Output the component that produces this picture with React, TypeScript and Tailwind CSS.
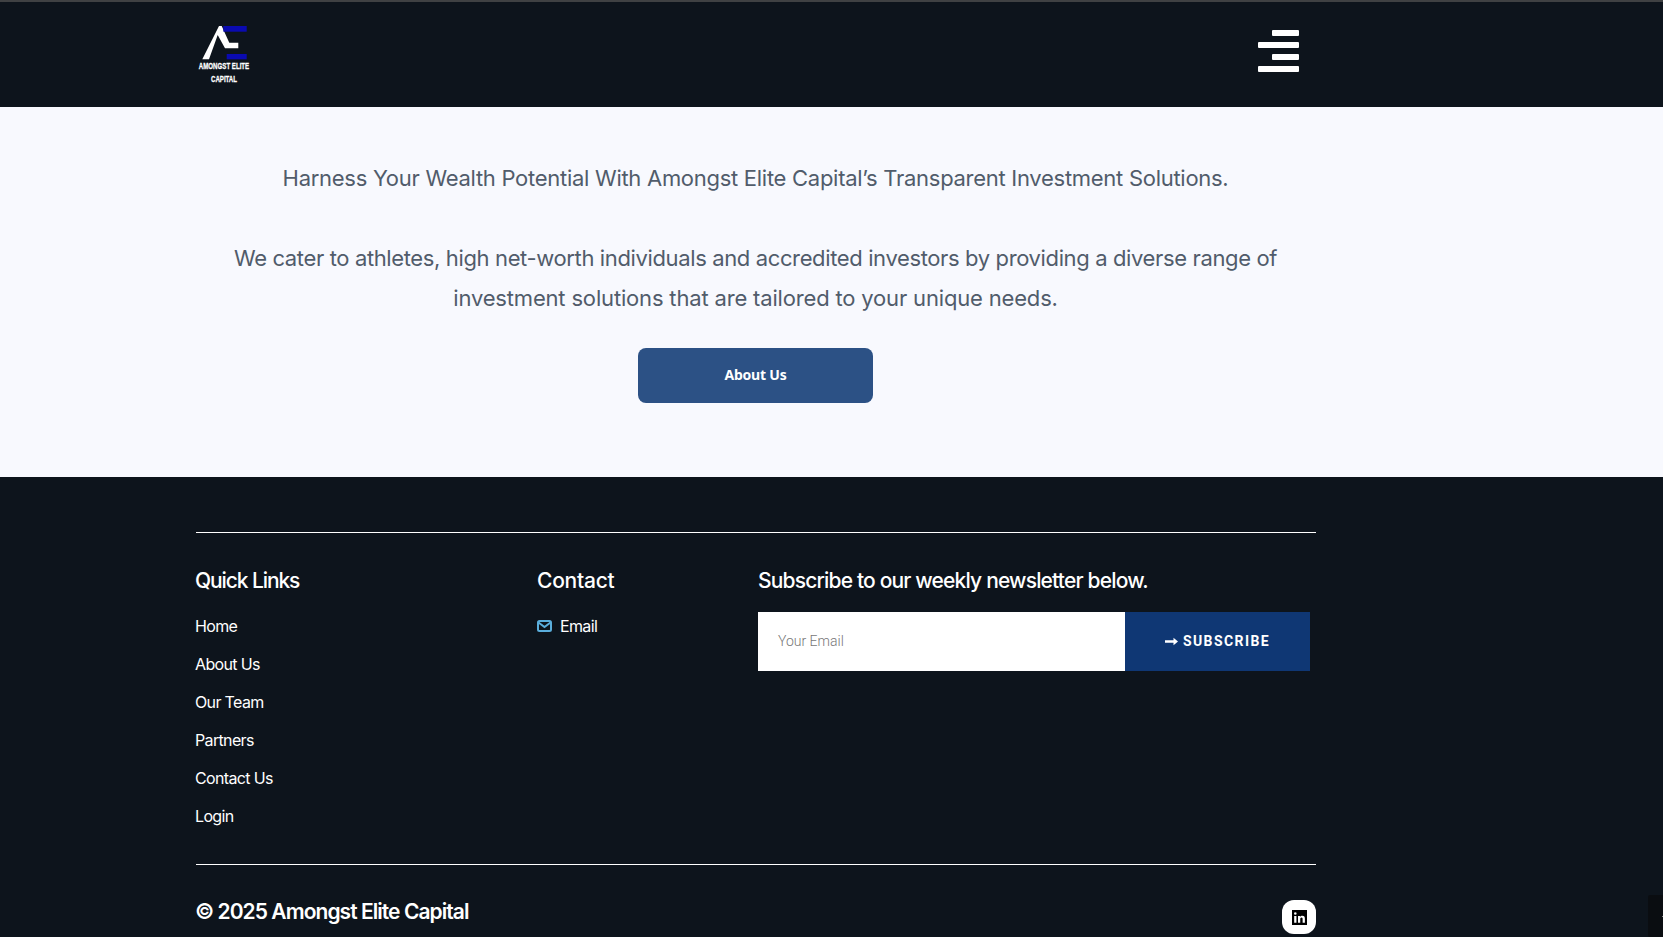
const quickLinks = ['Home', 'About Us', 'Our Team', 'Partners', 'Contact Us', 'Login'];

function Logo() {
  return (
    <div className="flex w-[48px] flex-col items-center">
      <svg width="48" height="34" viewBox="0 0 48 34" className="block">
        <path d="M2.300 33.300 L19 0 L21.700 0 L29.300 16.700 L38.300 16.700 L38.300 22.300 L25 22.300 L17.700 9 L9 33.300 Z" fill="#fff" />
        <rect x="23.300" y="0" width="23.400" height="5.700" fill="#0a0ab0" />
        <rect x="26.700" y="28" width="20" height="5.300" fill="#0a0ab0" />
      </svg>
      <div className="scale-x-[0.68] whitespace-nowrap text-center font-['Liberation_Sans',sans-serif] text-[9px] leading-[13px] font-bold text-white [-webkit-text-stroke:0.3px_white]">
        <div>AMONGST ELITE</div>
        <div>CAPITAL</div>
      </div>
    </div>
  );
}

function MenuBars() {
  return (
    <div className="flex w-[41px] flex-col items-end gap-[6px]">
      <div className="h-[6px] w-[27px] rounded-[1px] bg-white" />
      <div className="h-[6px] w-[41px] rounded-[1px] bg-white" />
      <div className="h-[6px] w-[27px] rounded-[1px] bg-white" />
      <div className="h-[6px] w-[41px] rounded-[1px] bg-white" />
    </div>
  );
}

function MailIcon() {
  return (
    <svg width="15" height="12" viewBox="0 0 15 12" fill="none" stroke="#5aaedc" strokeWidth="2">
      <rect x="1" y="1" width="13" height="10" rx="1.500" />
      <path d="M1.500 2.500 L7.500 7 L13.500 2.500" />
    </svg>
  );
}

function ArrowIcon() {
  return (
    <svg width="13" height="9" viewBox="0 0 13 9" fill="#fff">
      <path d="M0 3.300h8.500V0.800L13 4.500 8.500 8.200V5.700H0z" />
    </svg>
  );
}

export default function App() {
  return (
    <div className="relative h-[937px] overflow-hidden bg-[#0d141c] font-['Inter',sans-serif]">
      {/* Header */}
      <header className="flex h-[107px] items-start justify-between border-t-2 border-[#3f4143] bg-[#0d141c] pr-[364px] pl-[200px]">
        <div className="pt-[24px]">
          <Logo />
        </div>
        <div className="pt-[28px]">
          <MenuBars />
        </div>
      </header>

      {/* Hero */}
      <section className="h-[370px] bg-[#f8f9fe] pt-[51px]">
        <div className="ml-[195px] flex w-[1121px] flex-col items-center text-center text-[22px] leading-[40px] text-[#515c6b]">
          <p className="tracking-[-0.28px]">
            Harness Your Wealth Potential With Amongst Elite Capital’s Transparent Investment Solutions.
          </p>
          <p className="mt-[40px]">
            <span className="tracking-[-0.37px]">
              We cater to athletes, high net-worth individuals and accredited investors by providing a diverse range of
            </span>
            <br />
            <span className="tracking-[-0.17px]">investment solutions that are tailored to your unique needs.</span>
          </p>
          <button className="mt-[30px] h-[55px] w-[235px] rounded-[8px] bg-[#2c5185] pb-[2px] font-['Noto_Sans',sans-serif] text-[14px] leading-none font-bold tracking-[-0.2px] text-white">
            About Us
          </button>
        </div>
      </section>

      {/* Footer */}
      <footer className="ml-[195px] w-[1121px] pt-[55px] text-white">
        <div className="ml-px h-px bg-white" />
        <div className="flex pt-[33px]">
          <div className="w-[342px]">
            <h3 className="text-[21px] leading-[30px] font-medium tracking-[-1.1px]">Quick Links</h3>
            <ul className="mt-[18px] flex flex-col gap-[14px]">
              {quickLinks.map((link) => (
                <li key={link} className="text-[16px] leading-[24px] tracking-[-0.65px]">
                  {link}
                </li>
              ))}
            </ul>
          </div>
          <div className="w-[221px]">
            <h3 className="text-[21px] leading-[30px] font-medium tracking-[-0.25px]">Contact</h3>
            <div className="mt-[18px] flex items-center gap-[8px] text-[16px] leading-[24px] tracking-[-0.65px]">
              <MailIcon />
              Email
            </div>
          </div>
          <div className="flex-1">
            <h3 className="text-[21px] leading-[30px] font-medium tracking-[-0.83px]">
              Subscribe to our weekly newsletter below.
            </h3>
            <div className="mt-[16px] flex h-[59px] w-[552px]">
              <div className="flex w-[367px] items-center bg-white pl-[20px] font-['Roboto',sans-serif] text-[14px] font-light text-[#777]">
                Your Email
              </div>
              <button className="flex flex-1 items-center justify-center gap-[5px] bg-[#0f3774] font-['Roboto',sans-serif] text-[14px] font-bold tracking-[1.4px] text-white">
                <ArrowIcon />
                SUBSCRIBE
              </button>
            </div>
          </div>
        </div>
        <div className="mt-[36px] ml-px h-px bg-white" />
        <div className="flex items-start justify-between pt-[32px]">
          <div className="text-[21px] leading-[30px] font-semibold tracking-[-0.95px]">© 2025 Amongst Elite Capital</div>
          <div className="mt-[3px] flex h-[34px] w-[34px] items-center justify-center rounded-[12px] bg-white">
            <svg width="15" height="15" viewBox="0 0 24 24" fill="#000">
              <path d="M0 0h24v24H0z M3.500 9.500v11h3.600v-11z M5.300 3.600a2 2 0 1 0 0 4.100 2 2 0 0 0 0-4.100z M9.600 9.500v11h3.600v-5.600c0-1.600.5-2.800 2.100-2.800 1.500 0 1.700 1.300 1.700 2.900v5.500h3.600v-6.300c0-3-.8-5-4.100-5-1.600 0-2.700.8-3.300 1.800V9.500z" fillRule="evenodd" />
            </svg>
          </div>
        </div>
      </footer>

      {/* Corner widget tab */}
      <div className="absolute right-0 bottom-0 flex h-[42px] w-[15px] items-center justify-end rounded-l-[2px] bg-[#0a0d11]">
        <div className="h-px w-px bg-[#8a8a8a]" />
      </div>
    </div>
  );
}
